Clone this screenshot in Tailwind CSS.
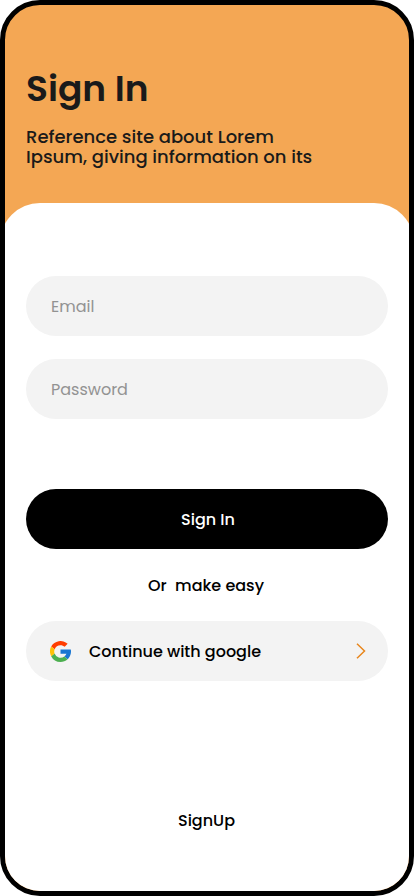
<!DOCTYPE html>
<html lang="en">
<head>
<meta charset="utf-8">
<meta name="viewport" content="width=device-width, initial-scale=1">
<title>Sign In</title>
<script src="https://cdn.jsdelivr.net/npm/@tailwindcss/browser@4"></script>
</head>
<body class="bg-white font-['Poppins','Inter',sans-serif]">
<main class="flex h-[896px] w-[414px] flex-col overflow-hidden rounded-[40px] border-[5px] border-black bg-[#f4a754]">
  <header class="h-[198px] shrink-0 px-[21px] pt-[62px] text-[#1a1a1a]">
    <h1 class="text-[36px] leading-[44px] font-semibold whitespace-nowrap">Sign In</h1>
    <p class="mt-[16px] text-[18px] leading-[20px] font-medium">Reference site about Lorem<br>Ipsum, giving information on its</p>
  </header>
  <section class="-mx-[5px] flex grow flex-col rounded-t-[40px] bg-white px-[26px] pt-[73px]">
    <form class="flex flex-col">
      <input type="email" placeholder="Email" class="h-[60px] rounded-full bg-[#f3f3f3] px-[25px] text-[16px] placeholder:text-[#929292]">
      <input type="password" placeholder="Password" class="mt-[23px] h-[60px] rounded-full bg-[#f3f3f3] px-[25px] text-[16px] placeholder:text-[#929292]">
      <button type="button" class="mt-[70px] flex h-[60px] items-center justify-center rounded-full bg-black pt-[2px] pl-[2px] text-[16px] font-medium text-white">Sign In</button>
    </form>
    <p class="mt-[25px] pr-[2px] text-center text-[16px] leading-[24px] font-medium whitespace-pre text-black">Or  make easy</p>
    <button type="button" class="mt-[23px] flex h-[60px] items-center rounded-full bg-[#f3f3f3] pr-[22px] pl-[24px] text-[16px] font-medium text-black">
      <svg class="size-[21px] shrink-0" viewBox="0 0 21 21">
        <path fill="#1976d2" d="M20.8 8.45H10.5v4.2h5.95a6.3 6.3 0 0 1-2.15 2.92l3.25 2.75C17.3 18.5 21 15.75 21 10.5c0-.7-.07-1.4-.2-2.05Z"/>
        <path fill="#ff3d00" d="M1.2 5.6l3.45 2.55A6.3 6.3 0 0 1 10.5 4.2c1.6 0 3.07.6 4.18 1.6l2.97-2.98A10.5 10.5 0 0 0 1.2 5.6Z"/>
        <path fill="#4caf50" d="M10.5 21c2.7 0 5.18-1.04 7.04-2.73l-3.25-2.75A6.3 6.3 0 0 1 4.57 12.6L1.15 15.24A10.5 10.5 0 0 0 10.5 21Z"/>
        <path fill="#ffc107" d="M1.2 5.6A10.5 10.5 0 0 0 1.15 15.24L4.57 12.6a6.3 6.3 0 0 1 .08-4.45Z"/>
      </svg>
      <span class="ml-[18px] pt-[2px] whitespace-nowrap">Continue with google</span>
      <svg class="ml-auto h-[16px] w-[10px]" viewBox="0 0 10 16" fill="none" stroke="#e8861c" stroke-width="1.5"><path d="M1 .7 8.5 8 1 15.3"/></svg>
    </button>
    <a class="mt-[128px] self-center pr-[1px] text-[16px] leading-[24px] font-medium text-black">SignUp</a>
  </section>
</main>
</body>
</html>
